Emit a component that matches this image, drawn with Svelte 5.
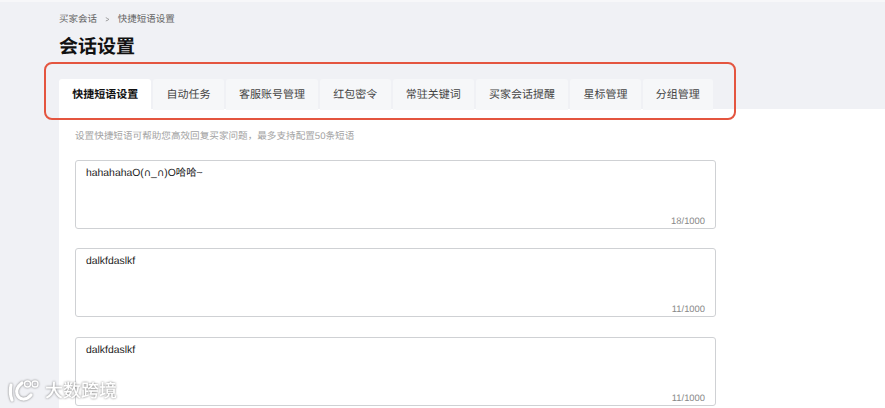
<script>
  const tabs = ['快捷短语设置', '自动任务', '客服账号管理', '红包密令', '常驻关键词', '买家会话提醒', '星标管理', '分组管理'];
  const items = [
    { text: 'hahahahaO(∩_∩)O哈哈~', count: '18/1000' },
    { text: 'dalkfdaslkf', count: '11/1000' },
    { text: 'dalkfdaslkf', count: '11/1000' }
  ];
</script>

<div class="page">
  <header class="head">
    <nav class="crumbs"><span>买家会话</span><span class="sep">&gt;</span><span>快捷短语设置</span></nav>
    <h1>会话设置</h1>
    <div class="tabs">
      {#each tabs as t, i}
        <div class="tab" class:active={i === 0}>{t}</div>
      {/each}
    </div>
  </header>
  <main class="body">
    <p class="hint">设置快捷短语可帮助您高效回复买家问题，最多支持配置50条短语</p>
    <div class="list">
      {#each items as it}
        <div class="box">
          <div class="txt">
            {#each it.text.split('∩') as part, i}{#if i > 0}<span class="cap">∩</span>{/if}{part}{/each}
          </div>
          <div class="count">{it.count}</div>
        </div>
      {/each}
    </div>
  </main>

  <div class="outline"></div>

  <div class="mark">
    <svg width="36" height="24" viewBox="0 0 36 24" fill="none" stroke="#fff" stroke-linecap="round">
      <path d="M4 6 C3 11 3 16 5 21" stroke-width="3.2" />
      <path d="M15 4 C10 8 9 12 10 15 C12 21 19 22 24 16" stroke-width="3.2" />
      <circle cx="20.5" cy="5" r="3" stroke-width="1.4" />
      <circle cx="28" cy="5" r="3" stroke-width="1.4" />
    </svg>
    <span>大数跨境</span>
  </div>
</div>

<style>
  :global(body) {
    margin: 0;
    background: #fff;
  }
  .page {
    position: relative;
    width: 885px;
    height: 408px;
    overflow: hidden;
    background: linear-gradient(to right, #f0f1f5 59px, #fff 59px);
    font-family: "Liberation Sans", "Noto Sans CJK SC", sans-serif;
    color: #1c1c1c;
    text-rendering: geometricPrecision;
  }
  .head {
    box-sizing: border-box;
    height: 109px;
    padding: 11px 0 0 59px;
    background: #f0f1f5;
    border-top: 2px solid #f7f7f9;
  }
  .crumbs {
    display: flex;
    align-items: center;
    gap: 8px;
    font-size: 9.5px;
    line-height: 14px;
    color: #666;
  }
  .sep {
    font-size: 8px;
    color: #888;
    transform: scaleX(0.8);
  }
  h1 {
    margin: 7px 0 0;
    font-size: 19px;
    line-height: 28px;
    font-weight: 700;
    color: #111;
  }
  .tabs {
    display: flex;
    gap: 2px;
    margin-top: 17px;
  }
  .tab {
    padding: 0 13.2px;
    height: 31px;
    line-height: 33px;
    font-size: 11px;
    color: #444;
    background: #f6f7f9;
    border-radius: 3px 3px 0 0;
    white-space: nowrap;
  }
  .tab.active {
    background: #fff;
    font-weight: 700;
    color: #111;
  }
  .body {
    margin-left: 59px;
    padding: 21px 0 0 16px;
    background: #fff;
  }
  .hint {
    margin: 0;
    font-size: 9.6px;
    line-height: 14px;
    color: #a3a3a3;
  }
  .list {
    display: flex;
    flex-direction: column;
    gap: 19.4px;
    margin-top: 16px;
    width: 641px;
  }
  .box {
    box-sizing: border-box;
    height: 69px;
    padding: 6px 10px 0;
    border: 1px solid #cfd1d4;
    border-radius: 3px;
    display: flex;
    flex-direction: column;
    justify-content: space-between;
  }
  .txt {
    font-size: 10.4px;
    line-height: 14px;
    color: #222;
  }
  .cap {
    font-family: "DejaVu Sans", sans-serif;
    font-size: 10px;
  }
  .count {
    align-self: flex-end;
    font-size: 9.4px;
    line-height: 14px;
    color: #888;
  }
  .outline {
    position: absolute;
    left: 44px;
    top: 62px;
    width: 692px;
    height: 58px;
    box-sizing: border-box;
    border: 2px solid #e4553f;
    border-radius: 8px;
  }
  .mark {
    position: absolute;
    left: 7px;
    top: 379px;
    display: flex;
    align-items: center;
    gap: 2px;
    filter: drop-shadow(0 0 1px rgba(70, 70, 70, .7));
    color: #fff;
  }
  .mark span {
    font-size: 18px;
    line-height: 24px;
    font-weight: 500;
  }
</style>
